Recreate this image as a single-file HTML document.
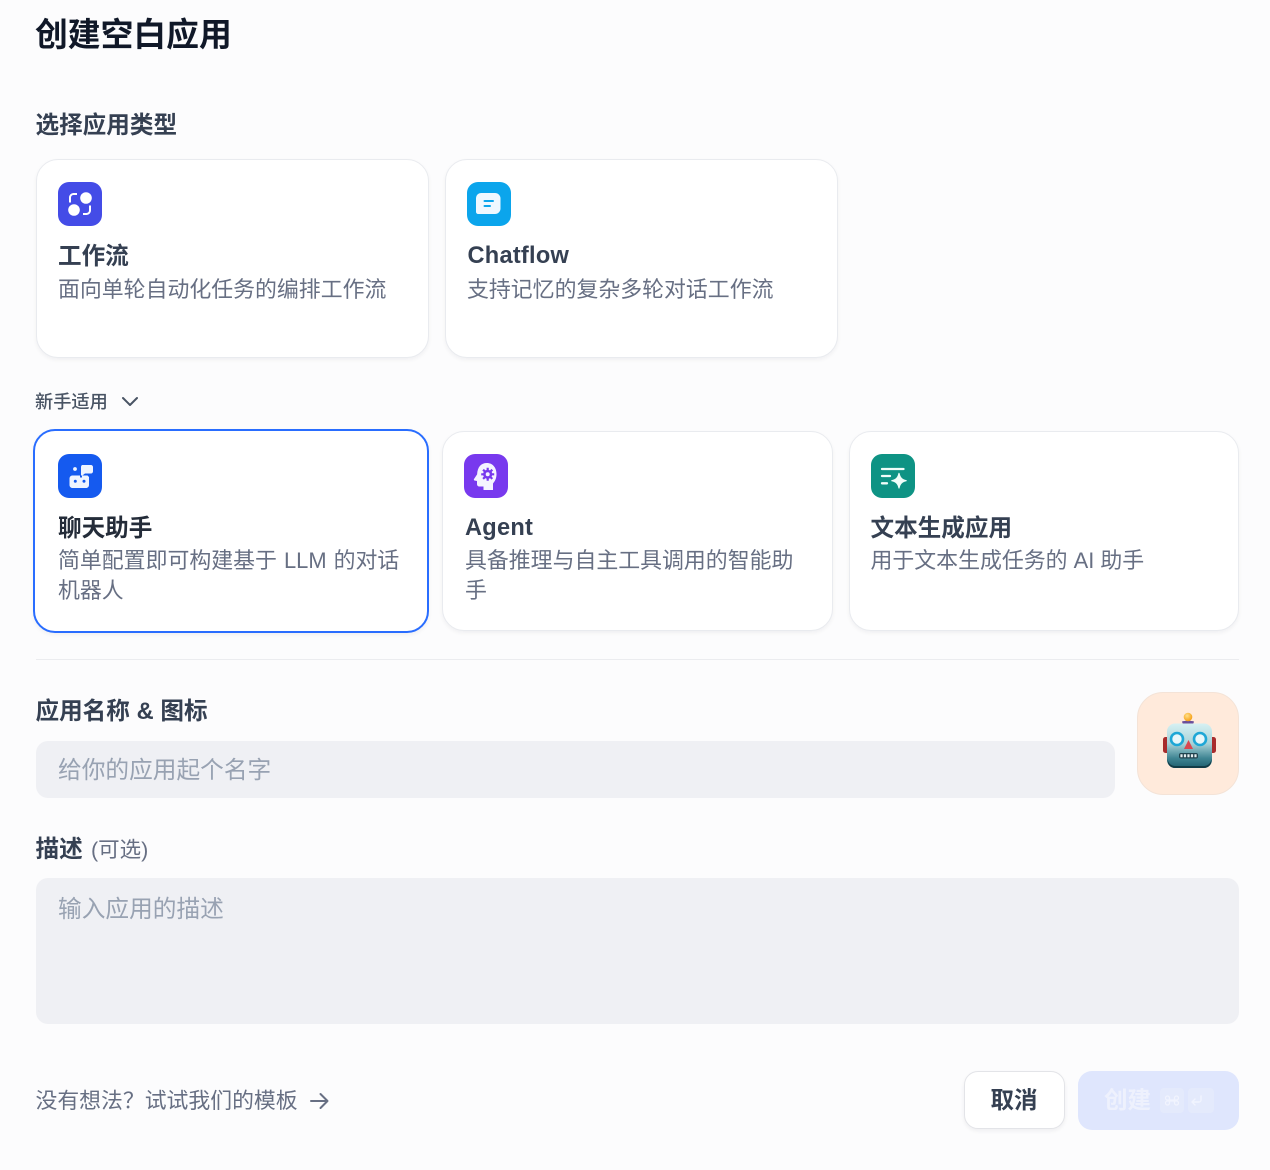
<!DOCTYPE html>
<html lang="zh"><head><meta charset="utf-8"><title>创建空白应用</title>
<style>
html,body{margin:0;padding:0}
body{width:1270px;height:1170px;background:#fcfcfd;position:relative;overflow:hidden;font-family:"Liberation Sans","Noto Sans CJK SC",sans-serif;-webkit-font-smoothing:antialiased}
.t{position:absolute;white-space:nowrap;line-height:1}
.card{position:absolute;box-sizing:border-box;background:#fff;border:1.5px solid #e9ebef;border-radius:22px;box-shadow:0 2px 4px rgba(16,24,40,.05)}
.ic{position:absolute;width:44px;height:44px;border-radius:11px;overflow:hidden}
.ic svg{display:block;width:44px;height:44px}
.h{font-size:23.6px;font-weight:600;color:#354052}
.d{font-size:21.9px;color:#676f83;line-height:30px;word-spacing:1px}
.lab{font-size:23.6px;font-weight:600;color:#354052}
.f{position:absolute;background:#eff0f4;border-radius:12px}
.ph{font-size:23.7px;color:#98a2b2}
</style></head><body>
<div class="t" style="left:35px;top:18.5px;font-size:32.8px;font-weight:600;color:#101828">创建空白应用</div>
<div class="t lab" style="left:35.5px;top:115px">选择应用类型</div>

<div class="card" style="left:35.5px;top:159px;width:393.5px;height:199px"></div>
<div class="ic" style="left:58px;top:182px;background:#444ce7"><svg viewBox="0 0 44 44"><circle cx="28" cy="16" r="5.8" fill="#fff"/><circle cx="16" cy="28" r="5.8" fill="#fff"/><path d="M12 20.500v-5a3.500 3.500 0 0 1 3.500-3.500h3.500M32 23.500v5a3.500 3.500 0 0 1-3.500 3.500h-3.500" fill="none" stroke="#fff" stroke-width="2"/></svg></div>
<div class="t h" style="left:58px;top:246px">工作流</div>
<div class="t d" style="left:58px;top:275px">面向单轮自动化任务的编排工作流</div>

<div class="card" style="left:444.5px;top:159px;width:393.5px;height:199px"></div>
<div class="ic" style="left:467px;top:182px;background:#0ba5ec"><svg viewBox="0 0 44 44"><path d="M14 11h14a5.500 5.500 0 0 1 5.500 5.500v10a5.500 5.500 0 0 1-5.500 5.500H11c-1 0-2-1-2-2V16a5 5 0 0 1 5-5z" fill="#eff8ff"/><path d="M17.500 19h8.500M17.500 24h5.500" stroke="#0ba5ec" stroke-width="2" stroke-linecap="round"/></svg></div>
<div class="t h" style="left:467.5px;top:245px;letter-spacing:.25px">Chatflow</div>
<div class="t d" style="left:467px;top:275px">支持记忆的复杂多轮对话工作流</div>

<div class="t" style="left:35px;top:393px;font-size:18.2px;font-weight:500;color:#495464">新手适用</div>
<svg style="position:absolute;left:120px;top:394px" width="20" height="16" viewBox="0 0 20 16"><path d="M3 4l7 7 7-7" fill="none" stroke="#495464" stroke-width="2" stroke-linecap="round" stroke-linejoin="round"/></svg>

<div class="card" style="left:33px;top:429px;width:396px;height:204px;border:2.2px solid #296dff"></div>
<div class="ic" style="left:58px;top:454px;background:#155aef"><svg viewBox="0 0 44 44"><path d="M14.500 21.500h15l1.500 1.500v8c0 1.700-1.300 3-3 3H14.500c-1.700 0-3-1.300-3-3v-6.500c0-1.700 1.300-3 3-3z" fill="#eff4ff"/><path d="M24 11h9c1.100 0 2 .9 2 2v4.500c0 1.100-.9 2-2 2h-6l-4 3v-9.500c0-1.100.9-2 1-2z" fill="#eff4ff"/><path d="M22 21.500h2v2h-2z" fill="#155aef"/><circle cx="17" cy="15" r="1.900" fill="#eff4ff"/><circle cx="17.300" cy="27.300" r="1.500" fill="#155aef"/><circle cx="26" cy="27.300" r="1.500" fill="#155aef"/></svg></div>
<div class="t h" style="left:58px;top:518px;color:#242c39">聊天助手</div>
<div class="t d" style="left:58px;top:546px">简单配置即可构建基于 LLM 的对话</div>
<div class="t d" style="left:58px;top:576px">机器人</div>

<div class="card" style="left:441.5px;top:431px;width:391px;height:199.500px"></div>
<div class="ic" style="left:464px;top:454px;background:#7839ee"><svg viewBox="0 0 44 44"><path d="M19.500 36v-3.500h-4c-1.500 0-2.500-1-2.500-2.500v-3l-2.500-.5c-.8-.2-.8-1-.4-1.600l3-4.500C13.500 13 17 9 23 9c5.500 0 9.500 4.500 9.500 11 0 4.500-1.500 7-3.500 9.500V36z" fill="#f5f3ff"/><circle cx="23.700" cy="20.300" r="4.600" fill="#7839ee"/><path d="M23.700 13.800v13M17.200 20.300h13M19.100 15.700l9.200 9.200M28.300 15.700l-9.200 9.200" stroke="#7839ee" stroke-width="2.200"/><circle cx="23.700" cy="20.300" r="2" fill="#f5f3ff"/></svg></div>
<div class="t h" style="left:465px;top:517px;letter-spacing:.25px">Agent</div>
<div class="t d" style="left:465px;top:546px">具备推理与自主工具调用的智能助</div>
<div class="t d" style="left:465px;top:576px">手</div>

<div class="card" style="left:848.5px;top:431px;width:390.500px;height:199.500px"></div>
<div class="ic" style="left:871px;top:454px;background:#0e9384"><svg viewBox="0 0 44 44"><path d="M11 15h21.500M11 22h8M11 29.300h5" stroke="#f0fdf9" stroke-width="2.300" stroke-linecap="round"/><path d="M28 19.400c.9 4.300 2.900 6.300 7.200 7.300-4.300 1-6.300 3-7.200 7.300-.9-4.300-2.900-6.300-7.200-7.300 4.300-1 6.300-3 7.200-7.300z" fill="#f0fdf9" stroke="#f0fdf9" stroke-width="1.200" stroke-linejoin="round"/></svg></div>
<div class="t h" style="left:870.5px;top:518px">文本生成应用</div>
<div class="t d" style="left:870.5px;top:546px;word-spacing:0">用于文本生成任务的 AI 助手</div>

<div style="position:absolute;left:36px;top:659px;width:1203px;height:1px;background:#ebecef"></div>

<div class="t lab" style="left:35.5px;top:701px;word-spacing:.2px">应用名称 &amp; 图标</div>
<div class="f" style="left:35.5px;top:741px;width:1079.5px;height:57px"></div>
<div class="t ph" style="left:58px;top:760px">给你的应用起个名字</div>

<div style="position:absolute;left:1136.5px;top:692px;width:102.500px;height:103px;box-sizing:border-box;background:#ffeadb;border:1.5px solid #f4e3d7;border-radius:26px"></div>
<svg style="position:absolute;left:1160px;top:712px" width="58" height="58" viewBox="0 0 58 58">
<defs><linearGradient id="rb" x1="0" y1="0" x2="0" y2="1"><stop offset="0" stop-color="#d6f1f3"/><stop offset=".45" stop-color="#a9d3d8"/><stop offset=".78" stop-color="#3f8593"/><stop offset="1" stop-color="#1f5f6e"/></linearGradient><radialGradient id="ob" cx=".4" cy=".35" r=".7"><stop offset="0" stop-color="#ffe08a"/><stop offset="1" stop-color="#f59a0b"/></radialGradient></defs>
<rect x="3" y="25" width="7" height="16" rx="2.500" fill="#a82c2c"/><rect x="49" y="25" width="7" height="16" rx="2.500" fill="#a82c2c"/>
<path d="M22 9.500c3-1 9-1 12 0-.5 3-3 4.500-6 4.500s-5.500-1.500-6-4.500z" fill="#6a4f9a"/>
<circle cx="28" cy="5" r="4.300" fill="url(#ob)"/>
<rect x="7" y="11.500" width="45" height="44.500" rx="8" fill="url(#rb)"/>
<path d="M7.500 47c0 6 3 9 8 9h28c5 0 8-3 8-9-1 5-4 7-8 7h-28c-4 0-7-2-8-7z" fill="#123c47"/>
<circle cx="17" cy="27" r="6" fill="#e8f7fa" stroke="#1ea7d6" stroke-width="2.600"/><circle cx="40" cy="27" r="6" fill="#e8f7fa" stroke="#1ea7d6" stroke-width="2.600"/>
<path d="M28.500 28l4.500 9h-9z" fill="#d9474f"/>
<rect x="19" y="41" width="19" height="5.500" rx="2" fill="#20424d"/><path d="M21.500 42.300v3M25 42.300v3M28.500 42.300v3M32 42.300v3M35.500 42.300v3" stroke="#e5eef0" stroke-width="2.200"/>
</svg>

<div class="t lab" style="left:35.5px;top:839px">描述</div>
<div class="t" style="left:91px;top:839.5px;font-size:21.5px;color:#676f83">(可选)</div>
<div class="f" style="left:35.5px;top:878px;width:1203.5px;height:146px"></div>
<div class="t ph" style="left:58px;top:899px">输入应用的描述</div>

<div class="t" style="left:35.5px;top:1090px;font-size:21.85px;color:#676f83">没有想法？试试我们的模板</div>
<svg style="position:absolute;left:308px;top:1090px" width="24" height="22" viewBox="0 0 24 22"><path d="M3 11h16M12.500 4l7 7-7 7" fill="none" stroke="#676f83" stroke-width="2" stroke-linecap="round" stroke-linejoin="round"/></svg>

<div style="position:absolute;left:963.5px;top:1071px;width:101px;height:58px;box-sizing:border-box;background:#fff;border:1.5px solid #e3e4e8;border-radius:14px;box-shadow:0 2px 4px rgba(16,24,40,.06)"></div>
<div class="t" style="left:990.5px;top:1089px;font-size:23.5px;font-weight:600;color:#354052">取消</div>
<div style="position:absolute;left:1078px;top:1071px;width:161px;height:59px;background:#dfe6fd;border-radius:14px"></div>
<div class="t" style="left:1104px;top:1089px;font-size:23.5px;font-weight:600;color:#eef1fd">创建</div>
<div style="position:absolute;left:1160px;top:1088px;width:24px;height:25px;background:#e4eafc;border-radius:4px"></div>
<div style="position:absolute;left:1188px;top:1088px;width:26px;height:25px;background:#e4eafc;border-radius:4px"></div>
<svg style="position:absolute;left:1160px;top:1088px" width="54" height="25" viewBox="0 0 54 25"><path d="M9.500 10v5a2 2 0 1 1-2-2h9a2 2 0 1 1-2 2v-5a2 2 0 1 1 2 2h-9a2 2 0 1 1 2-2z" fill="none" stroke="#f1f4fe" stroke-width="1.300"/><path d="M41 8v4a2 2 0 0 1-2 2h-7M35 11l-3 3 3 3" fill="none" stroke="#f1f4fe" stroke-width="1.400" stroke-linecap="round" stroke-linejoin="round"/></svg>
</body></html>
